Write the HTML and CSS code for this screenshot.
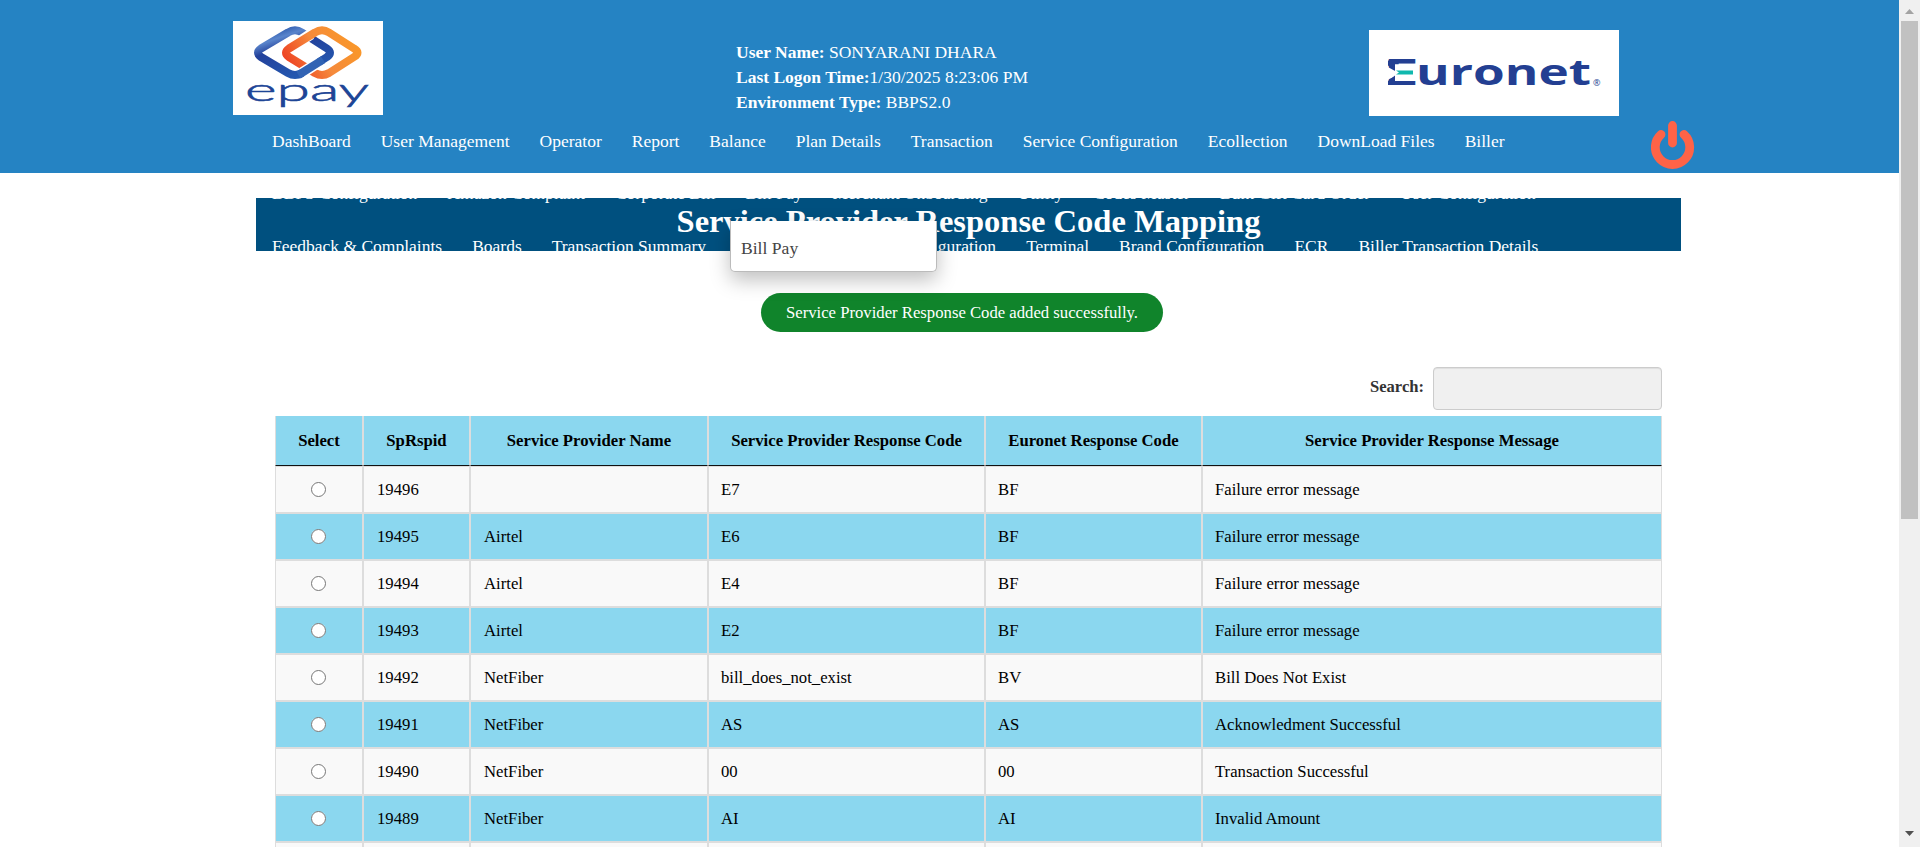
FILE: index.html
```html
<!DOCTYPE html>
<html lang="en">
<head>
<meta charset="utf-8">
<title>Service Provider Response Code Mapping</title>
<link rel="stylesheet" href="styles.css">
</head>
<body>
<div class="page">
<header class="header">
  <div class="brand">
    <svg class="epay" viewBox="0 0 150 94" width="150" height="94">
      <defs>
        <linearGradient id="blue" gradientUnits="userSpaceOnUse" x1="45" y1="6" x2="62" y2="56"><stop offset="0" stop-color="#2350a6"/><stop offset=".2" stop-color="#5a85cc"/><stop offset=".4" stop-color="#23419b"/><stop offset="1" stop-color="#2458b0"/></linearGradient>
        <linearGradient id="orange" gradientUnits="userSpaceOnUse" x1="60" y1="50" x2="115" y2="15"><stop offset="0" stop-color="#ee4423"/><stop offset=".5" stop-color="#f58a3c"/><stop offset="1" stop-color="#f9962a"/></linearGradient>
      </defs>
      <rect width="150" height="94" fill="#fff"/>
      <g fill="none" stroke-width="8" stroke-linejoin="round">
        <path stroke="url(#blue)" d="M55 11.500Q62 7 69 11.500L94 27.500Q100 31.500 94 36L69 52Q62 56 55 52L28 36Q22 31.500 28 27.500Z"/>
        <path stroke="#fff" stroke-width="11" d="M78 13.100L62 23.500"/>
        <path stroke="url(#orange)" d="M82 11.500Q89 7 96 11.500L121 27.500Q128 31.500 121 36L96 52Q89 56 82 52L56 36Q50 31.500 56 27.500Z"/>
        <path stroke="#fff" stroke-width="11" d="M86 41.200L69 52"/>
        <path stroke="#3163b4" d="M90 38.600L65.500 54"/>
      </g>
      <text x="12" y="80" textLength="124" lengthAdjust="spacingAndGlyphs" class="epay-word">epay</text>
    </svg>
    <div class="user">
      <div><b>User Name:</b> SONYARANI DHARA</div>
      <div><b>Last Logon Time:</b>1/30/2025 8:23:06 PM</div>
      <div><b>Environment Type:</b> BBPS2.0</div>
    </div>
    <svg class="euronet" viewBox="0 0 250 86" width="250" height="86">
      <rect width="250" height="86" fill="#fff"/>
      <text x="14" y="55" textLength="36" lengthAdjust="spacingAndGlyphs" class="euronet-word">E</text>
      <text x="47" y="55" textLength="175" lengthAdjust="spacingAndGlyphs" class="euronet-word">uronet</text>
      <path fill="#fff" d="M17 36L27 41.500V46L17 50.500ZM26 34.300H50V51H26Z"/>
      <path fill="#233f92" d="M19 35.500V30.500H26V40ZM19 51V55H26V45.500Z"/>
      <path fill="#10b8ae" d="M27 40.400H44V44.600H27L30 42.500Z"/>
      <text x="224" y="56" class="euronet-reg">®</text>
    </svg>
  </div>
  <div class="navbar">
    <nav class="menu">
      <div class="row"><a>DashBoard</a><a>User Management</a><a>Operator</a><a>Report</a><a>Balance</a><a>Plan Details</a><a>Transaction</a><a>Service Configuration</a><a>Ecollection</a><a>DownLoad Files</a><a>Biller</a></div>
      <div class="row"><a>BBPS Configuration</a><a>Amazon Complaint</a><a>Corporate Bill</a><a>Bill Pay</a><a>Merchant Onboarding</a><a>Utility</a><a>Codes Master</a><a>Bulk Gift Card Order</a><a>User Configuration</a></div>
      <div class="row"><a>Feedback &amp; Complaints</a><a>Boards</a><a>Transaction Summary</a><a class="wide">Configuration</a><a>Terminal</a><a>Brand Configuration</a><a>ECR</a><a>Biller Transaction Details</a></div>
    </nav>
    <svg class="power" viewBox="0 0 44 48" width="44" height="48"><path d="M10 13.500A17.200 17.200 0 1 0 33 13.500M21.500 4.500V22" fill="none" stroke="#ff6347" stroke-width="8.800" stroke-linecap="round"/></svg>
  </div>
  <div class="dropdown">Bill Pay</div>
</header>
<main class="main">
  <h1 class="banner">Service Provider Response Code Mapping</h1>
  <div class="notice">Service Provider Response Code added successfully.</div>
  <div class="content">
    <label class="search">Search: <input type="text"></label>
    <table class="grid">
      <colgroup><col class="c1"><col class="c2"><col class="c3"><col class="c4"><col class="c5"><col class="c6"></colgroup>
      <thead><tr><th>Select</th><th>SpRspid</th><th>Service Provider Name</th><th>Service Provider Response Code</th><th>Euronet Response Code</th><th>Service Provider Response Message</th></tr></thead>
      <tbody>
        <tr><td><input type="radio"></td><td>19496</td><td></td><td>E7</td><td>BF</td><td>Failure error message</td></tr>
        <tr><td><input type="radio"></td><td>19495</td><td>Airtel</td><td>E6</td><td>BF</td><td>Failure error message</td></tr>
        <tr><td><input type="radio"></td><td>19494</td><td>Airtel</td><td>E4</td><td>BF</td><td>Failure error message</td></tr>
        <tr><td><input type="radio"></td><td>19493</td><td>Airtel</td><td>E2</td><td>BF</td><td>Failure error message</td></tr>
        <tr><td><input type="radio"></td><td>19492</td><td>NetFiber</td><td>bill_does_not_exist</td><td>BV</td><td>Bill Does Not Exist</td></tr>
        <tr><td><input type="radio"></td><td>19491</td><td>NetFiber</td><td>AS</td><td>AS</td><td>Acknowledment Successful</td></tr>
        <tr><td><input type="radio"></td><td>19490</td><td>NetFiber</td><td>00</td><td>00</td><td>Transaction Successful</td></tr>
        <tr><td><input type="radio"></td><td>19489</td><td>NetFiber</td><td>AI</td><td>AI</td><td>Invalid Amount</td></tr>
        <tr><td></td><td></td><td></td><td></td><td></td><td></td></tr>
      </tbody>
    </table>
  </div>
</main>
</div>
<aside class="scrollbar">
  <svg width="9" height="5" viewBox="0 0 9 5"><path d="M0 5L4.500 0 9 5Z" fill="#a3a3a3"/></svg>
  <div class="thumb"></div>
  <svg class="down" width="9" height="5" viewBox="0 0 9 5"><path d="M0 0H9L4.500 5Z" fill="#505050"/></svg>
</aside>
</body>
</html>
```
FILE: styles.css
```css
* { box-sizing: border-box; }
body {
  margin: 0;
  height: 847px;
  overflow: hidden;
  display: flex;
  background: #fff;
  color: #000;
  font-family: "Liberation Serif", "Times New Roman", serif;
  font-size: 16.7px;
}
.page { width: 1899px; height: 847px; overflow: hidden; }
.header {
  position: relative;
  z-index: 2;
  height: 173px;
  background: #2583c3;
  color: #fff;
  font-size: 17.5px;
}
.brand { display: flex; height: 115px; padding: 21px 280px 0 233px; justify-content: space-between; align-items: flex-start; }
.epay, .euronet, .power { display: block; }
.epay-word { font: 300 32px Lato, sans-serif; fill: #1d4596; stroke: #1d4596; stroke-width: .6px; }
.euronet { margin-top: 9px; }
.euronet-word { font: 700 35px "Open Sans", sans-serif; fill: #233f92; }
.euronet-reg { font: 9px "Open Sans", sans-serif; fill: #233f92; }
.user { margin: 19px 0 0 20px; width: 300px; line-height: 25px; white-space: nowrap; }
.navbar { display: flex; justify-content: space-between; padding: 0 204px 0 257px; }
.menu { width: 1300px; }
.row { display: flex; height: 52.500px; align-items: center; white-space: nowrap; }
.row a { padding: 0 15px; }
.row .wide { width: 290px; text-align: right; }
.power { margin-top: 6px; }
.dropdown {
  position: absolute;
  left: 730px;
  top: 221px;
  width: 207px;
  height: 51px;
  padding: 15px 10px;
  line-height: 24px;
  font-size: 17.6px;
  color: #444;
  background: #fff;
  border: 1px solid #bbb;
  border-top: 0;
  border-radius: 0 0 5px 5px;
  box-shadow: 0 8px 20px rgba(0, 0, 0, .25);
}
.main { padding: 25px 218px 0 256px; }
.banner {
  margin: 0;
  height: 53px;
  line-height: 47px;
  background: #00507f;
  color: #fff;
  text-align: center;
  font-size: 32.5px;
}
.notice {
  width: 402px;
  height: 39px;
  margin: 42px 0 0 505px;
  border-radius: 20px;
  background: #10842b;
  color: #fff;
  line-height: 39px;
  text-align: center;
}
.content { padding: 35px 19px 0; }
.search { display: flex; height: 43px; justify-content: flex-end; gap: 9px; line-height: 39px; font-size: 16.6px; font-weight: bold; color: #333; }
.search input { width: 229px; height: 43px; border: 1px solid #ccc; border-radius: 4px; background: #f0f0f0; box-shadow: inset 0 1px 1px rgba(0, 0, 0, .075); }
.grid { width: 1387px; margin-top: 6px; border-collapse: separate; border-spacing: 0; table-layout: fixed; }
.grid th, .grid td { border: 1px solid #ddd; }
.grid th { height: 50px; padding: 0; border-top: 0; border-bottom-color: #111; background: #8bd7ef; }
.grid td { height: 47px; padding: 0 13px; background: #f9f9f9; }
.grid td:nth-child(n+4) { padding-left: 12px; }
.grid tr:nth-child(even) td { background: #8bd7ef; }
.grid td:first-child { text-align: center; line-height: 0; }
.grid input { width: 15px; height: 15px; margin: 0 1px 1px 0; vertical-align: middle; }
.c1 { width: 88px; }
.c2 { width: 107px; }
.c3 { width: 238px; }
.c4 { width: 277px; }
.c5 { width: 217px; }
.c6 { width: 460px; }
.scrollbar { width: 21px; height: 847px; padding: 9px 2px 11px; background: #f0f0f0; display: flex; flex-direction: column; align-items: center; }
.scrollbar svg { display: block; }
.thumb { width: 17px; height: 498px; margin-top: 7px; background: #c1c1c1; }
.down { margin-top: auto; }
```
